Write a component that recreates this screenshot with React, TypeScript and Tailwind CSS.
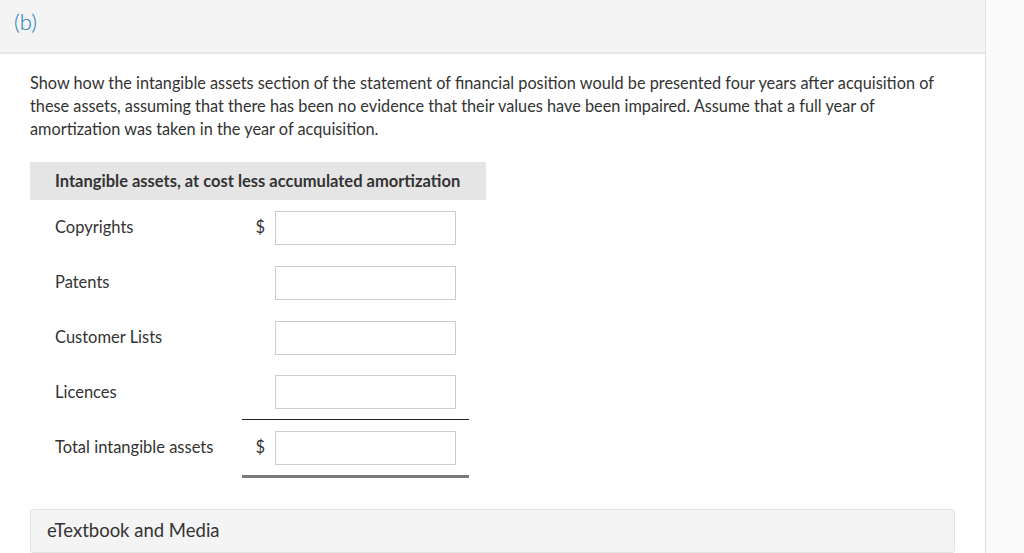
import React from 'react';

const rows = [
  { label: 'Copyrights', dollar: true },
  { label: 'Patents', dollar: false },
  { label: 'Customer Lists', dollar: false },
  { label: 'Licences', dollar: false, underline: true },
];

function AmountInput() {
  return (
    <input
      type="text"
      className="h-[34px] w-[181px] border border-[#cccccc] bg-white px-2 text-[15px] outline-none"
    />
  );
}

function Row({ label, dollar, bottom }: { label: string; dollar: boolean; bottom?: string }) {
  return (
    <div className="flex">
      <div className="flex h-[55px] w-[212px] items-center pl-[25px]">{label}</div>
      <div className={`flex h-[55px] w-[227px] items-center justify-end gap-[10px] pr-[13px] ${bottom ?? ''}`}>
        <span className={dollar ? '' : 'invisible'}>$</span>
        <AmountInput />
      </div>
    </div>
  );
}

export default function App() {
  return (
    <div className="flex min-h-[553px] w-[1024px] bg-[#fafafa] font-['Lato','Open_Sans',sans-serif] text-[#333333]">
      <div className="w-[986px] border-r border-[#e0e0e0] bg-white">
        <div className="h-[54px] border-b-2 border-[#e6e6e6] bg-[#f4f4f4] pl-[14px] pt-[7px]">
          <span className="text-[22px] font-light leading-[30px] text-[#1a7bb9]">(b)</span>
        </div>

        <div className="px-[30px]">
          <p className="mt-[17px] text-[16.3px] leading-[23px]">
            Show how the intangible assets section of the statement of financial position would be presented four years after acquisition of these assets, assuming that there has been no evidence that their values have been impaired. Assume that a full year of amortization was taken in the year of acquisition.
          </p>

          <div className="mt-[22px] text-[16.5px]">
            <div className="flex h-[38px] w-[456px] items-center bg-[#e5e5e5] pl-[25px] font-bold">
              Intangible assets, at cost less accumulated amortization
            </div>
            {rows.map((r) => (
              <Row
                key={r.label}
                label={r.label}
                dollar={r.dollar}
                bottom={r.underline ? 'border-b border-[#222222]' : ''}
              />
            ))}
            <Row label="Total intangible assets" dollar bottom="h-[58px] border-b-[3px] border-[#7a7a7a]" />
          </div>

          <div className="mt-[31px] flex h-[44px] items-center rounded-[3px] border border-[#e3e3e3] bg-[#f4f4f4] pl-[16px] text-[18.5px]">
            eTextbook and Media
          </div>
        </div>
      </div>
    </div>
  );
}
